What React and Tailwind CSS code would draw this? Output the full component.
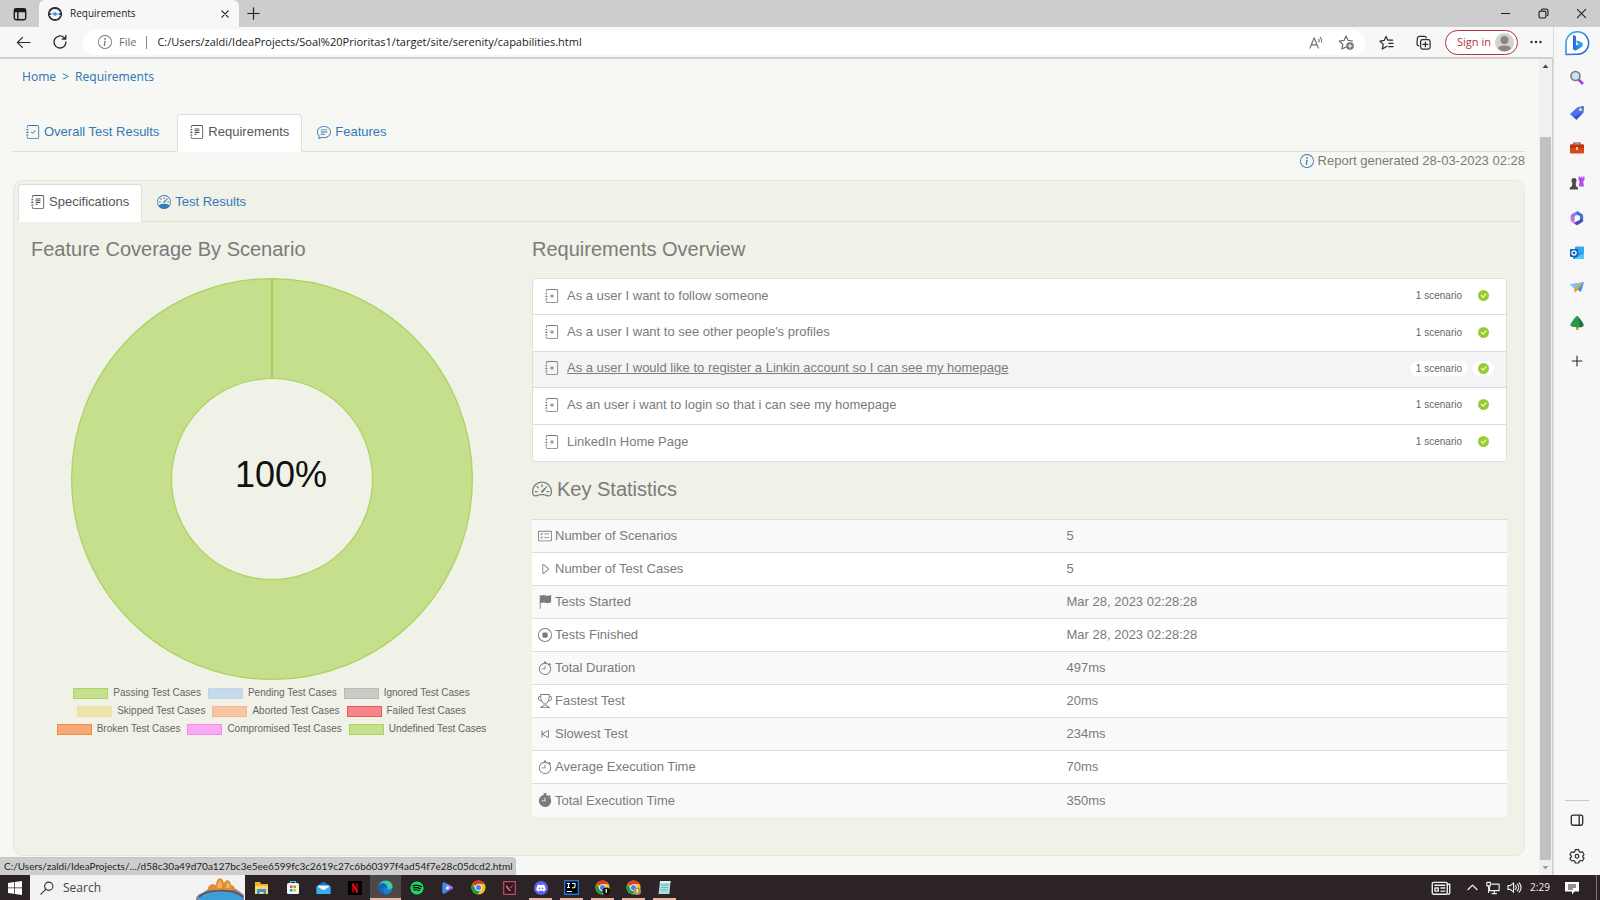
import React from "react";
import {
  BsJournalCheck, BsJournalText, BsJournalPlus, BsChatText, BsInfoCircle, BsSpeedometer,
  BsSpeedometer2, BsCardChecklist, BsCaretRight, BsFlagFill, BsStopCircle, BsStopwatch,
  BsTrophy, BsSkipStart, BsStopwatchFill, BsCheckCircleFill,
} from "react-icons/bs";
import { FaSpotify, FaDiscord } from "react-icons/fa";

const features = [
  { name: "As a user I want to follow someone" },
  { name: "As a user I want to see other people's profiles" },
  { name: "As a user I would like to register a Linkin account so I can see my homepage", hovered: true },
  { name: "As an user i want to login so that i can see my homepage" },
  { name: "LinkedIn Home Page" },
];

const statistics = [
  [BsCardChecklist, "Number of Scenarios", "5"],
  [BsCaretRight, "Number of Test Cases", "5"],
  [BsFlagFill, "Tests Started", "Mar 28, 2023 02:28:28"],
  [BsStopCircle, "Tests Finished", "Mar 28, 2023 02:28:28"],
  [BsStopwatch, "Total Duration", "497ms"],
  [BsTrophy, "Fastest Test", "20ms"],
  [BsSkipStart, "Slowest Test", "234ms"],
  [BsStopwatch, "Average Execution Time", "70ms"],
  [BsStopwatchFill, "Total Execution Time", "350ms"],
];

const legend = [
  [
    ["Passing Test Cases", "bg-[#c5df8d] border-[#aad65f]"],
    ["Pending Test Cases", "bg-[#c7daea] border-[#bfd5ea]"],
    ["Ignored Test Cases", "bg-[#cacac6] border-[#b9b9b6]"],
  ],
  [
    ["Skipped Test Cases", "bg-[#ede4a9] border-[#ede2a2]"],
    ["Aborted Test Cases", "bg-[#f8c4a4] border-[#f8b48c]"],
    ["Failed Test Cases", "bg-[#f8858a] border-[#ee5565]"],
  ],
  [
    ["Broken Test Cases", "bg-[#f7a877] border-[#f28a48]"],
    ["Compromised Test Cases", "bg-[#f8aaf3] border-[#f58bee]"],
    ["Undefined Test Cases", "bg-[#c5df8d] border-[#aad65f]"],
  ],
];

function IconButton({ label, className = "", children }) {
  return (
    <button type="button" aria-label={label} className={"flex shrink-0 items-center justify-center " + className}>
      {children}
    </button>
  );
}

function Stroke({ size = 16, width = 1.2, className = "", children }) {
  return (
    <svg width={size} height={size} viewBox="0 0 16 16" fill="none" stroke="currentColor" strokeWidth={width} strokeLinecap="round" strokeLinejoin="round" className={className}>
      {children}
    </svg>
  );
}

function TitleBar() {
  return (
    <header className="flex h-[27px] shrink-0 items-stretch bg-[#cdcdcd] text-[#1b1b1b]">
      <IconButton label="Tab actions" className="w-[39px]">
        <Stroke size={14} width={1.6}>
          <rect x="1.5" y="2" width="13" height="12.5" rx="2" />
          <path d="M2 3.2h12v2H2z" fill="currentColor" />
          <path d="M5.5 5v9" />
        </Stroke>
      </IconButton>
      <div className="flex w-[200px] items-center rounded-t-md bg-[#f7f7f7] pl-2 pr-1">
        <svg width="16" height="16" viewBox="0 0 16 16" fill="none">
          <path d="M2.200 6A6.200 6.200 0 0 1 13.800 6M13.800 10A6.200 6.200 0 0 1 2.200 10" stroke="#26303a" strokeWidth="1.800" />
          <path d="M1 5.500v5l3.600-2.500zM15 5.500v5l-3.600-2.500z" fill="#26303a" />
          <circle cx="8" cy="8" r="1.800" fill="#2f7fd0" />
          <path d="M4.500 8h7" stroke="#5c9fe0" strokeWidth="1" />
        </svg>
        <span className="ml-[7px] flex-1 text-[10px]">Requirements</span>
        <IconButton label="Close tab" className="size-5">
          <Stroke size={10} width={1.8}><path d="M3 3l10 10M13 3L3 13" /></Stroke>
        </IconButton>
      </div>
      <IconButton label="New tab" className="w-[29px]">
        <Stroke size={13} width={1.4}><path d="M8 1v14M1 8h14" /></Stroke>
      </IconButton>
      <div className="flex-1" />
      <IconButton label="Minimize" className="w-[38px]"><Stroke size={11} width={1.5}><path d="M2 8h12" /></Stroke></IconButton>
      <IconButton label="Restore" className="w-[38px]">
        <Stroke size={11} width={1.6}><rect x="1.5" y="4.5" width="10" height="10" rx="2" /><path d="M5 2.5C5.500 1.500 6 1.500 7 1.500h4.500a3 3 0 0 1 3 3V9c0 1 0 1.500-1 2" /></Stroke>
      </IconButton>
      <IconButton label="Close" className="w-[38px]"><Stroke size={11} width={1.5}><path d="M2 2l12 12M14 2L2 14" /></Stroke></IconButton>
    </header>
  );
}

function Toolbar() {
  return (
    <div className="flex h-8 shrink-0 items-center border-b-2 border-[#cfcfcf] bg-[#f7f7f7] pl-1 text-[#2b2b2b]">
      <IconButton label="Back" className="w-[38px]"><Stroke size={15}><path d="M15 8H1.500M7 2.500L1.500 8 7 13.500" /></Stroke></IconButton>
      <IconButton label="Refresh" className="w-[36px]"><Stroke size={16} width={1.3}><path d="M14 8a6 6 0 1 1-2-4.500l1.500 1.500M13.800 1.500V5h-3.500" /></Stroke></IconButton>
      <div className="ml-[5px] flex h-[25px] flex-1 items-center rounded-full bg-white pl-[15px] pr-1">
        <BsInfoCircle className="size-[14px] text-[#767676]" />
        <span className="ml-[7px] text-[11px] text-[#6b6b6b]">File</span>
        <span className="mx-[10px] h-[13px] w-px bg-[#8a8a8a]" />
        <input aria-label="Address" readOnly value="C:/Users/zaldi/IdeaProjects/Soal%20Prioritas1/target/site/serenity/capabilities.html" className="min-w-0 flex-1 bg-transparent text-[11px] text-[#1b1b1b] outline-none" />
        <IconButton label="Read aloud" className="w-[30px] text-[#6b6b6b]">
          <Stroke size={15}><path d="M1 14L5.500 3 10 14M2.700 10.500h5.600M10.500 4.500a3 3 0 0 1 0 3M12 2.500a5 5 0 0 1 1.300 5" /></Stroke>
        </IconButton>
        <IconButton label="Add to favorites" className="w-[30px] text-[#6b6b6b]">
          <Stroke size={16}><path d="M8 13l-4 2 .8-4.600L1.300 7l4.700-.6L8 2l2 4.300 4.500.7" /><circle cx="12" cy="12" r="3.800" fill="currentColor" stroke="none" /><path d="M12 10v4M10 12h4" stroke="white" /></Stroke>
        </IconButton>
      </div>
      <IconButton label="Favorites" className="ml-[2px] w-[38px]">
        <Stroke size={15} width={1.3}><path d="M8.500 12l-5 3 1-5L1 6.500l4.500-.7L7.500 1.500l2 4h5M10.500 9h4.500M10.500 12.500h4.500" /></Stroke>
      </IconButton>
      <IconButton label="Collections" className="w-9">
        <Stroke size={15} width={1.3}><rect x="5" y="5" width="10" height="10" rx="2" /><path d="M10 7.500v5M7.500 10h5M3 11.500A2.200 2.200 0 0 1 1 9.500L1.500 3.500a2.200 2.200 0 0 1 2-2h5.500a2 2 0 0 1 2 1.500" /></Stroke>
      </IconButton>
      <button type="button" className="ml-1 flex h-[25px] w-[73px] shrink-0 items-center justify-between rounded-full border border-[#b3343f] bg-white pl-[11px] pr-[3px] text-[11px] text-[#b3343f]">
        Sign in
        <svg width="19" height="19" viewBox="0 0 19 19"><circle cx="9.500" cy="9.500" r="9.500" fill="#d4d1ce" /><circle cx="9.500" cy="7" r="4" fill="#8a8682" /><path d="M3 15.500c0-4 13-4 13 0a9 9 0 0 1-13 0z" fill="#8a8682" /></svg>
      </button>
      <IconButton label="Settings and more" className="w-[35px]">
        <svg width="12" height="4" viewBox="0 0 12 4" fill="currentColor"><circle cx="1.500" cy="2" r="1.200" /><circle cx="6" cy="2" r="1.200" /><circle cx="10.500" cy="2" r="1.200" /></svg>
      </IconButton>
    </div>
  );
}

function Tab({ icon: Icon, active, className = "px-3", children }) {
  const state = active
    ? "rounded-t border-[#ddded9] border-b-white bg-white text-[#555]"
    : "border-transparent text-[#337ab7]";
  return (
    <a href="#" className={"-mb-px flex items-center gap-1 border pb-[2px] " + state + " " + className}>
      <Icon className="size-[14px]" />
      {children}
    </a>
  );
}

function Donut() {
  return (
    <svg viewBox="0 0 402 402" className="w-[402px] max-w-full" role="img" aria-label="Feature coverage: 100%">
      <circle cx="201" cy="201" r="150.500" fill="none" stroke="#c5df8d" strokeWidth="100" />
      <circle cx="201" cy="201" r="200.400" fill="none" stroke="#a9d45c" strokeWidth="1.200" />
      <circle cx="201" cy="201" r="100.500" fill="none" stroke="#a9d45c" strokeWidth="1.200" />
      <path d="M201 0v101" stroke="#a0d04c" strokeWidth="1.600" />
      <text x="210" y="209" textAnchor="middle" fontSize="36" fill="#111" fontFamily="Liberation Sans, sans-serif">100%</text>
    </svg>
  );
}

function Coverage() {
  return (
    <section className="w-[505px] shrink-0">
      <h2 className="pl-3 text-xl leading-6">Feature Coverage By Scenario</h2>
      <div className="mt-[17px] flex flex-col items-center">
        <Donut />
        <ul className="mt-1 flex flex-col items-center text-[10px] leading-[18px] text-[#666]">
          {legend.map((row) => (
            <li key={row[0][0]} className="flex gap-[7px]">
              {row.map(([name, color]) => (
                <span key={name} className="flex items-center gap-[5px]">
                  <span className={"h-[11px] w-[35px] border " + color} />
                  {name}
                </span>
              ))}
            </li>
          ))}
        </ul>
      </div>
    </section>
  );
}

function Overview() {
  return (
    <section className="min-w-0 flex-1">
      <h2 className="text-xl leading-6">Requirements Overview</h2>
      <ul className="mt-[17px] grid min-h-[184px] auto-rows-fr divide-y divide-[#dcdcdc] overflow-hidden rounded border border-[#dfe0da] bg-white">
        {features.map(({ name, hovered }) => (
          <li key={name} className={"flex items-center px-3 pb-[9px] pt-[7px] leading-[18px] " + (hovered ? "bg-[#f4f4f5]" : "")}>
            <BsJournalPlus className="size-[14px] shrink-0" />
            <a href="#" className={"ml-2 flex-1 " + (hovered ? "underline" : "")}>{name}</a>
            <span className="rounded-full bg-white px-[6px] text-[10px] leading-[15px] text-[#666]">1 scenario</span>
            <span className="ml-1 flex h-[15px] w-[22px] items-center justify-center rounded-full bg-white">
              <BsCheckCircleFill className="size-[11px] text-[#99cc33]" />
            </span>
          </li>
        ))}
      </ul>
      <h2 className="mt-[15px] flex items-center gap-[5px] text-xl leading-6"><BsSpeedometer2 />Key Statistics</h2>
      <table className="mt-[18px] w-full table-fixed border-collapse text-left">
        <tbody>
          {statistics.map(([Icon, label, value]) => (
            <tr key={label} className="h-[33px] border-t border-[#ddd] bg-white odd:bg-[#f9f9f9]">
              <th scope="row" className="w-[54%] pl-[6px] font-normal">
                <span className="flex items-center gap-[3px]"><Icon className="size-[14px]" />{label}</span>
              </th>
              <td className="pl-2">{value}</td>
            </tr>
          ))}
        </tbody>
      </table>
    </section>
  );
}

function Report() {
  return (
    <main className="min-w-0 flex-1 overflow-hidden bg-[#f7f8f3] pl-[13px] pr-[14px] font-['Liberation_Sans',Arial,sans-serif] text-[13px] text-[#7b7b7b]">
      <nav aria-label="Breadcrumb" className="flex gap-[6px] pl-[9px] pt-[9px] font-['Noto_Sans',sans-serif] text-xs leading-[18px] text-[#337ab7]">
        <a href="#">Home</a><span>&gt;</span><a href="#">Requirements</a>
      </nav>
      <nav aria-label="Report sections" className="mt-7 flex h-[38px] gap-[2px] border-b border-[#dddedb]">
        <Tab icon={BsJournalCheck} className="pl-3 pr-[15px]">Overall Test Results</Tab>
        <Tab icon={BsJournalText} active>Requirements</Tab>
        <Tab icon={BsChatText}>Features</Tab>
      </nav>
      <p className="flex items-center justify-end gap-1 leading-[18px]">
        <BsInfoCircle className="size-[14px] text-[#337ab7]" />Report generated 28-03-2023 02:28
      </p>
      <div className="mt-[10px] rounded-[10px] border border-[#e6e8dd] bg-[#f0f1e7] px-1 pb-[38px] pt-[3px]">
        <nav aria-label="Requirement views" className="flex h-[38px] gap-[2px] border-b border-[#dfe0d8]">
          <Tab icon={BsJournalText} active>Specifications</Tab>
          <Tab icon={BsSpeedometer}>Test Results</Tab>
        </nav>
        <div className="flex gap-2 pl-px pr-[13px] pt-[15px]">
          <Coverage />
          <Overview />
        </div>
      </div>
    </main>
  );
}

function ScrollBar() {
  return (
    <div aria-hidden="true" className="flex w-[13px] shrink-0 flex-col items-center bg-[#f0f0f0]">
      <svg width="7" height="15" viewBox="0 0 7 15"><path d="M0.500 9L3.500 5.500 6.500 9z" fill="#444" /></svg>
      <div className="h-[63px]" />
      <div className="w-[11px] flex-1 bg-[#c1c1c1]" />
      <svg width="7" height="15" viewBox="0 0 7 15"><path d="M0.500 6L3.500 9.500 6.500 6z" fill="#999" /></svg>
    </div>
  );
}

const sideIcons = [
  ["Search", <><path d="M9.500 9.500l4.500 4.500" stroke="#b13be0" strokeWidth="2.600" /><circle cx="6.500" cy="6" r="4.500" fill="#c4e4f2" stroke="#747b80" strokeWidth="1.600" /></>],
  ["Shopping", <><path d="M1.500 9L9 2.500 14.500 1.500 14 7.500 7.500 14.500z" fill="#4474ee" stroke="#4474ee" strokeWidth="1" strokeLinejoin="round" /><path d="M4.500 12L14 7l-6.500 7.500z" fill="#3b50d8" /><circle cx="11.500" cy="4.500" r="1.600" fill="#ffe07a" /></>],
  ["Tools", <><path d="M5 5V3h6v2" fill="none" stroke="#7a3a20" strokeWidth="1.200" /><rect x="1" y="4.500" width="14" height="9" rx="1" fill="#d9481b" /><path d="M1 5.500q0-1 1-1h12q1 0 1 1V8H1z" fill="#b83610" /><rect x="7" y="7" width="2" height="3" fill="#f3c9a8" /></>],
  ["Games", <><path d="M9.500 1.500h1.300v1.200h1V1.500h1.300v1.200h1V1.500h1.400V5l-1.200 1 .6 5.500H9.800L10.500 6l-1-1z" fill="#b44cf0" /><circle cx="5" cy="5.500" r="2.500" fill="#4a4a4a" /><path d="M2.800 7.300h4.400v1.200H6.500l.8 3 1.700 1v2H.8v-2l1.900-1 .8-3h-.7z" fill="#4a4a4a" /></>],
  ["Microsoft 365", <><path d="M8.500 1L3 4Q1.800 4.800 1.800 6v4.500L5.500 8.500V6.300L10.300 3.500z" fill="#8f7be6" /><path d="M8.500 1Q7 2 7.500 4.500L11 6.200V10l3.200 1.200V6q0-1.300-1.200-2z" fill="#3c78d4" /><path d="M14.200 10.500q0 1-1.200 1.700L9 14.700q-1 .6-2 0L4.500 13l6.500-3.200V8z" fill="#5048b8" /><path d="M1.800 6v4q0 1.300 1.200 2l4 2.500q-2-1-1.500-3.500V8z" fill="#b77be6" /><circle cx="8.200" cy="7.900" r="2.300" fill="#f7f7f7" /></>],
  ["Outlook", <><rect x="6" y="1.500" width="9" height="9" rx="1" fill="#32a9e8" /><path d="M4 8h11v6H4z" fill="#1c8ad8" /><path d="M9 11l6-3v6H5z" fill="#55c5f5" /><rect x="1" y="4" width="8" height="8" rx="1" fill="#0c63b8" /><circle cx="5" cy="8" r="2.100" fill="none" stroke="#fff" strokeWidth="1.300" /></>],
  ["Drop", <><path d="M1 4.500L15 2l-3 10-4-2.500z" fill="#3a94e8" /><path d="M1 4.500L15 2 5.500 9z" fill="#79c6f5" /><path d="M5 8.500L15 2 8.500 10 6 13z" fill="#e6a02c" /></>],
  ["Tree", <><rect x="7" y="11" width="2.500" height="4" fill="#e0922c" /><path d="M8 1C10 2 15 8.500 14.500 10.500 14 13 2 13 1.500 10.500 1 8.500 6 2 8 1z" fill="#26994c" /><path d="M8 1c2 1 7 7.500 6.500 9.500-.3 1.500-3 2-5 1.800C12 9 10 4 8 1z" fill="#187a3c" /></>],
];

function SideBar() {
  return (
    <aside className="flex w-[47px] shrink-0 flex-col items-center border-l border-[#dcdcdc] bg-[#f7f7f7] pb-[2px] text-[#2b2b2b]">
      <IconButton label="Bing chat" className="h-[33px] pb-px">
        <svg width="26" height="26" viewBox="0 0 26 26" fill="none">
          <path d="M2 24.500V13A11.300 11.300 0 1 1 13 24.300z" fill="#fff" stroke="url(#ring)" strokeWidth="1.500" strokeLinejoin="round" />
          <path d="M9 5l3 1.200v9.300l3-1.600-1.800-.9-1-2.800 5.300 2c2 .9 2 3.700.2 4.800l-5.500 3.300q-1.200.6-2.300-.2L9 18.700z" fill="url(#b)" />
          <defs>
            <linearGradient id="ring" x1="0" y1="0" x2="1" y2="1"><stop stopColor="#3fa9f2" /><stop offset="1" stopColor="#2455c8" /></linearGradient>
            <linearGradient id="b" x1="0" y1="0" x2="1" y2="0"><stop stopColor="#2463dc" /><stop offset="1" stopColor="#2fb4f6" /></linearGradient>
          </defs>
        </svg>
      </IconButton>
      {sideIcons.map(([label, drawing]) => (
        <IconButton key={label} label={label} className="h-[35px] w-full">
          <svg width="16" height="16" viewBox="0 0 16 16">{drawing}</svg>
        </IconButton>
      ))}
      <IconButton label="Customize" className="h-[41px] w-full"><Stroke size={12} width={1.5}><path d="M8 1.500v13M1.500 8h13" /></Stroke></IconButton>
      <div className="flex-1" />
      <div className="w-6 border-t border-[#c9c9c9]" />
      <IconButton label="Hide sidebar" className="h-[38px] w-full"><Stroke size={14} width={1.500}><rect x="1.500" y="2.500" width="13" height="11.500" rx="2" /><path d="M10.500 3v10.500" /></Stroke></IconButton>
      <IconButton label="Settings" className="h-[34px] w-full">
        <svg width="16" height="16" viewBox="0 0 24 24" fill="none" stroke="currentColor" strokeWidth="1.800" strokeLinejoin="round">
          <path d="M9.500 2.500h5l.8 3 2 1.100 3-.9 2.300 4.300-2.200 2.200v1l2.200 2.200-2.500 4.100-2.900-.8-1.900 1.100-.8 2.700h-5l-.8-2.700-1.900-1.100-2.900.8-2.500-4.100 2.200-2.200v-1L1.400 10l2.400-4.300 2.900.9 2-1.100z" />
          <circle cx="12" cy="12.500" r="2.800" />
        </svg>
      </IconButton>
    </aside>
  );
}

function Chrome({ badge }) {
  return (
    <svg width="15" height="15" viewBox="0 0 16 16">
      <circle cx="8" cy="8" r="7.500" fill="#fbc116" />
      <path d="M8 8L1.500 4.200A7.500 7.500 0 0 1 14.500 4.200H8z" fill="#e33b2e" />
      <path d="M1.500 4.200A7.500 7.500 0 0 0 7 15.400L10.500 9.500 5 9.800z" fill="#229a4c" />
      <circle cx="8" cy="8" r="3.600" fill="#fff" />
      <circle cx="8" cy="8" r="2.800" fill="#4285f4" />
      {badge && <circle cx="12" cy="12" r="4" fill={badge} />}
      {badge && <path d="M12 9.500v4" stroke="#eee" strokeWidth="1.500" />}
    </svg>
  );
}

const apps = [
  { name: "File Explorer", art: <svg width="15" height="14" viewBox="0 0 15 14"><path d="M1 1h5l1 2h7v10H1z" fill="#f0b429" /><path d="M1 5h13v8H1z" fill="#fbd768" /><path d="M3 13V8h9v5H9.500v-2h-4v2z" fill="#3c96d9" /></svg> },
  { name: "Microsoft Store", art: <svg width="14" height="15" viewBox="0 0 14 15"><path d="M4.500 4V1.500h5V4" fill="none" stroke="#5db8ea" strokeWidth="1.200" /><rect x="1" y="3" width="12" height="11" rx="1.500" fill="#f5f5f5" /><path d="M4 5.500h2.500V8H4z" fill="#f25022" /><path d="M7.500 5.500H10V8H7.500z" fill="#7fba00" /><path d="M4 9h2.500v2.500H4z" fill="#00a4ef" /><path d="M7.500 9H10v2.500H7.500z" fill="#ffb900" /></svg> },
  { name: "Mail", art: <svg width="15" height="13" viewBox="0 0 15 13"><path d="M0.500 5l7-4.500 7 4.500v8H.5z" fill="#1374c4" /><path d="M2 4.500h11V9H2z" fill="#e8f4fc" /><path d="M.5 5l7 4.500 7-4.500v8H.5z" fill="#36aef0" /></svg> },
  { name: "Netflix", art: <svg width="14" height="14" viewBox="0 0 14 14"><path d="M0 0h14v14H0z" fill="#000" /><path d="M5 2.500v9M9 2.500v9" stroke="#a10812" strokeWidth="1.800" /><path d="M4.800 2.500l4.400 9" stroke="#e50914" strokeWidth="1.900" /></svg> },
  { name: "Microsoft Edge", active: true, art: <svg width="15" height="15" viewBox="0 0 16 16"><circle cx="8" cy="8" r="7.500" fill="#1b7fd4" /><path d="M.8 6.500C2-1.500 15.500-1 15.500 7c0 3-4 3.500-6 2.500 2-2.500-1-5-4-4-2 .5-3.800 1-4.700 1z" fill="#3fcf9c" /><path d="M.8 6.500C2 2 8 2.500 9.500 6c.5 1.200.3 2.300 0 3.500C7 7 5 8 5.500 11c.4 2.500 2 4 4 4.300C3 16.500-.5 11.500.8 6.500z" fill="#1464b8" /></svg> },
  { name: "Spotify", art: <FaSpotify className="size-[14px] rounded-full bg-black text-[#1ed760]" /> },
  { name: "Media player", art: <svg width="13" height="14" viewBox="0 0 12 14"><path d="M1 3q0-2 2-1.500L10.500 5.500q1.500 1.500 0 3L3 12.500Q1 13 1 11z" fill="#6c5ce0" /><path d="M1 3q0-2 2-1.500L5 3v8.500l-2 1Q1 13 1 11z" fill="#3f8de8" /><path d="M5 2.500l5.500 3q1.500 1.500 1 2H6z" fill="#a87be8" /><circle cx="6" cy="7" r="1.700" fill="#e8ecff" /></svg> },
  { name: "Google Chrome", art: <Chrome /> },
  { name: "Valorant", art: <svg width="13" height="14" viewBox="0 0 13 14"><path d="M.7 .7h11.600v12.600H.7z" fill="#2a1c24" stroke="#c64a5c" strokeWidth="1.200" /><path d="M3.500 4.500v1.500l2.500 3.500h1.500zM9.500 4.500l-2 2.500" fill="#e85a6c" stroke="#e85a6c" strokeWidth="1" /></svg> },
  { name: "Discord", open: true, art: <span className="flex size-[14px] items-center justify-center rounded-full bg-[#5865f2]"><FaDiscord className="size-[10px] text-white" /></span> },
  { name: "IntelliJ IDEA", open: true, art: <svg width="15" height="15" viewBox="0 0 15 15"><path d="M.7 .7h13.600v13.600H.7z" fill="#000" stroke="#2472d8" strokeWidth="1.400" /><path d="M3 3.500h3M4.500 3.500v4M3 7.500h3M8 3.500h3v3.200q0 1-1.300 1H8M3 11.500h5" stroke="#fff" strokeWidth="1.100" fill="none" /></svg> },
  { name: "Google Chrome profile 1", open: true, art: <Chrome badge="#111" /> },
  { name: "Google Chrome profile 2", open: true, art: <Chrome badge="#b5935f" /> },
  { name: "Notepad", open: true, art: <svg width="13" height="15" viewBox="0 0 13 15"><path d="M2 1h10.500l-1 13H.5z" fill="#a9dbe0" /><path d="M2 1h10.500v2H2z" fill="#e5f0ec" /><path d="M3 5h7.500M3 7.500h7M2.500 10h7" stroke="#6faeb8" strokeWidth=".8" /></svg> },
];

function appState({ active, open }) {
  if (active) return "w-[31px] border-b-[#edb5a5] bg-[#4d4848]";
  if (open) return "mx-1 w-[23px] border-b-[#edb5a5]";
  return "w-[31px] border-b-transparent";
}

function TaskBar() {
  return (
    <footer className="flex h-[25px] shrink-0 items-stretch bg-[#2b2325] text-[#f0f0f0]">
      <IconButton label="Start" className="w-[30px]">
        <svg width="14" height="14" viewBox="0 0 14 14" fill="#fff"><path d="M0 2l6-.9v5.500H0zM6.700 1L14 0v6.600H6.700zM0 7.300h6v5.500L0 12zM6.700 7.300H14V14l-7.300-1z" /></svg>
      </IconButton>
      <label className="flex w-[215px] items-center overflow-hidden bg-[#f2f2f2] pl-[10px] text-[#333]">
        <Stroke size={14} width={1.300}><circle cx="10" cy="6" r="4.700" /><path d="M6.500 9.500L1 15" /></Stroke>
        <input aria-label="Search" placeholder="Search" className="ml-[9px] min-w-0 flex-1 bg-transparent text-xs outline-none placeholder:text-[#444]" />
        <svg width="50" height="25" viewBox="0 0 50 25">
          <path d="M1 25c0-4 3-6 6-7 3-2 8-5 12-5h20c4 2 7 5 10 7v5z" fill="#8c7d8c" />
          <path d="M13 15c-1-3 2-5 4-6 2 0 3 1 4 1 0-3 1-6 4-7 3 1 3 3 4 5 1-1 2-3 4-3 2 1 3 3 3 5 3 0 4 3 4 5z" fill="#dd8e33" />
          <path d="M22 13c0-3 1-6 3-8 2 2 2 5 2 8zM31 13c0-3 1-5 2-6 2 2 2 4 2 6z" fill="#f3b459" />
          <path d="M3 25c4-10 38-12 46 0z" fill="#3e9fd8" />
          <path d="M4 22c8-8 34-9 44 0" fill="none" stroke="#504a68" strokeWidth="1.500" />
        </svg>
      </label>
      <nav aria-label="Applications" className="ml-px flex">
        {apps.map((app) => (
          <IconButton key={app.name} label={app.name} className={"border-b-2 border-t-2 border-t-transparent " + appState(app)}>
            {app.art}
          </IconButton>
        ))}
      </nav>
      <div className="flex-1" />
      <IconButton label="News" className="w-[40px]">
        <Stroke size={20} width={1.100}><rect x="1" y="3.500" width="12" height="9.500" rx="1" /><path d="M13 5h2v7q0 1-1.500 1M3 5.800h8M8 8h3M8 10.500h3" /><path d="M3.200 8h2.600v2.500H3.200z" /></Stroke>
      </IconButton>
      <IconButton label="Show hidden icons" className="w-[22px]"><Stroke size={11} width={1.800}><path d="M1.500 11L8 4.500 14.500 11" /></Stroke></IconButton>
      <IconButton label="Network" className="w-5"><Stroke size={14} width={1.300}><path d="M6.500 3.500h8.500v7.500H4V7M7 14.500h5M9.500 11v3.500M1 1.500h4v4H1zM3 5.500V13" /></Stroke></IconButton>
      <IconButton label="Volume" className="w-[22px]"><Stroke size={15} width={1.200}><path d="M1 6h2.500L7 3v10L3.500 10H1zM9 6a3 3 0 0 1 0 4M11 4.500a5 5 0 0 1 0 7M13 3a8 8 0 0 1 0 10" /></Stroke></IconButton>
      <button type="button" className="w-[30px] text-[10px]">2:29</button>
      <IconButton label="Notifications" className="w-[33px]">
        <svg width="14" height="14" viewBox="0 0 14 14"><path d="M0 1h14v9.500H9.500L7 13.500V10.500H0z" fill="#fff" /><path d="M3 4h8M3 6h8M3 8h5" stroke="#2b2325" strokeWidth="1" /></svg>
      </IconButton>
      <div className="ml-2 w-1 border-l border-[#777]" />
    </footer>
  );
}

export default function App() {
  return (
    <div className="flex h-screen flex-col overflow-hidden font-['Open_Sans','Noto_Sans',sans-serif]">
      <TitleBar />
      <div className="flex min-h-0 flex-1">
        <div className="flex min-w-0 flex-1 flex-col">
          <Toolbar />
          <div className="relative flex min-h-0 flex-1 border-r border-[#cfcfcf]">
            <Report />
            <ScrollBar />
            <div className="absolute bottom-0 left-0 w-[516px] rounded-tr border-t border-r border-[#c4c4c4] bg-[#cdcdcd] px-1 font-[Lato,sans-serif] text-[10px] leading-[17px] text-[#222]">
              C:/Users/zaldi/IdeaProjects/.../d58c30a49d70a127bc3e5ee6599fc3c2619c27c6b60397f4ad54f7e28c05dcd2.html
            </div>
          </div>
        </div>
        <SideBar />
      </div>
      <TaskBar />
    </div>
  );
}
